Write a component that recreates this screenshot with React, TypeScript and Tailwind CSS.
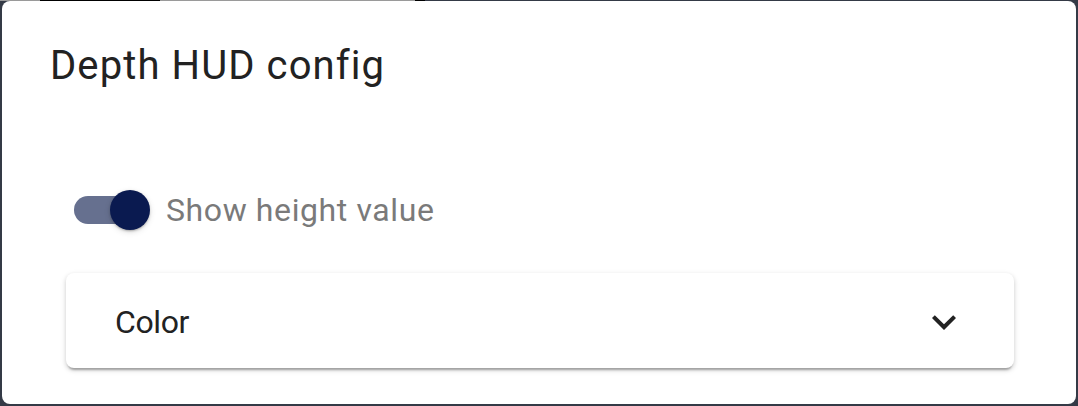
function Toggle({ on }: { on: boolean }) {
  return (
    <div className="relative flex h-[76px] w-[116px] shrink-0 items-center">
      <div className={`ml-[24px] h-[28px] w-[68px] rounded-full ${on ? 'bg-[#66708f]' : 'bg-[#9e9e9e]'}`} />
      <div
        className={`absolute top-[18px] h-[40px] w-[40px] rounded-full shadow-[0_2px_2px_-1px_rgba(0,0,0,0.2),0_1px_3px_0_rgba(0,0,0,0.14),0_2px_6px_0_rgba(0,0,0,0.12)] ${
          on ? 'left-[60px] bg-[#0a1a50]' : 'left-[16px] bg-white'
        }`}
      />
    </div>
  );
}

function ChevronDown() {
  return (
    <svg width="48" height="48" viewBox="0 0 24 24" fill="#222">
      <path d="M16.59 8.59 12 13.17 7.41 8.59 6 10l6 6 6-6z" />
    </svg>
  );
}

export default function App() {
  return (
    <div className="flex h-[406px] w-[1078px] flex-col bg-[#343a46] font-['Roboto','Liberation_Sans',sans-serif]">
      <div className="h-px shrink-0 bg-[linear-gradient(to_right,#9a9a9a_0,#9a9a9a_40px,#000_40px,#000_160px,#9a9a9a_160px,#9a9a9a_415px,#000_415px,#000_425px,#343a46_425px)]" />
      <div className="mx-[2px] mb-[2px] flex flex-1 flex-col overflow-hidden rounded-lg bg-white">
        <h2 className="px-[48px] pt-[33px] pb-[31px] text-[40px] font-normal leading-[64px] tracking-[1.1px] text-[#222]">
          Depth HUD config
        </h2>
        <div className="flex flex-col px-[48px] pt-[43px]">
          <label className="flex items-center">
            <Toggle on />
            <span className="text-[32px] leading-[48px] tracking-[0.6px] text-[#7a7a7a]">Show height value</span>
          </label>
          <div className="mt-[25px] ml-[16px] mr-[14px] flex h-[95px] items-center justify-between rounded-lg bg-white pl-[49px] pr-[46px] pt-[3px] shadow-[0_4px_2px_-2px_rgba(0,0,0,0.25),0_2px_4px_0_rgba(0,0,0,0.12),0_2px_6px_0_rgba(0,0,0,0.1)]">
            <span className="text-[32px] leading-[48px] tracking-[-0.4px] text-[#222]">Color</span>
            <ChevronDown />
          </div>
        </div>
      </div>
    </div>
  );
}
